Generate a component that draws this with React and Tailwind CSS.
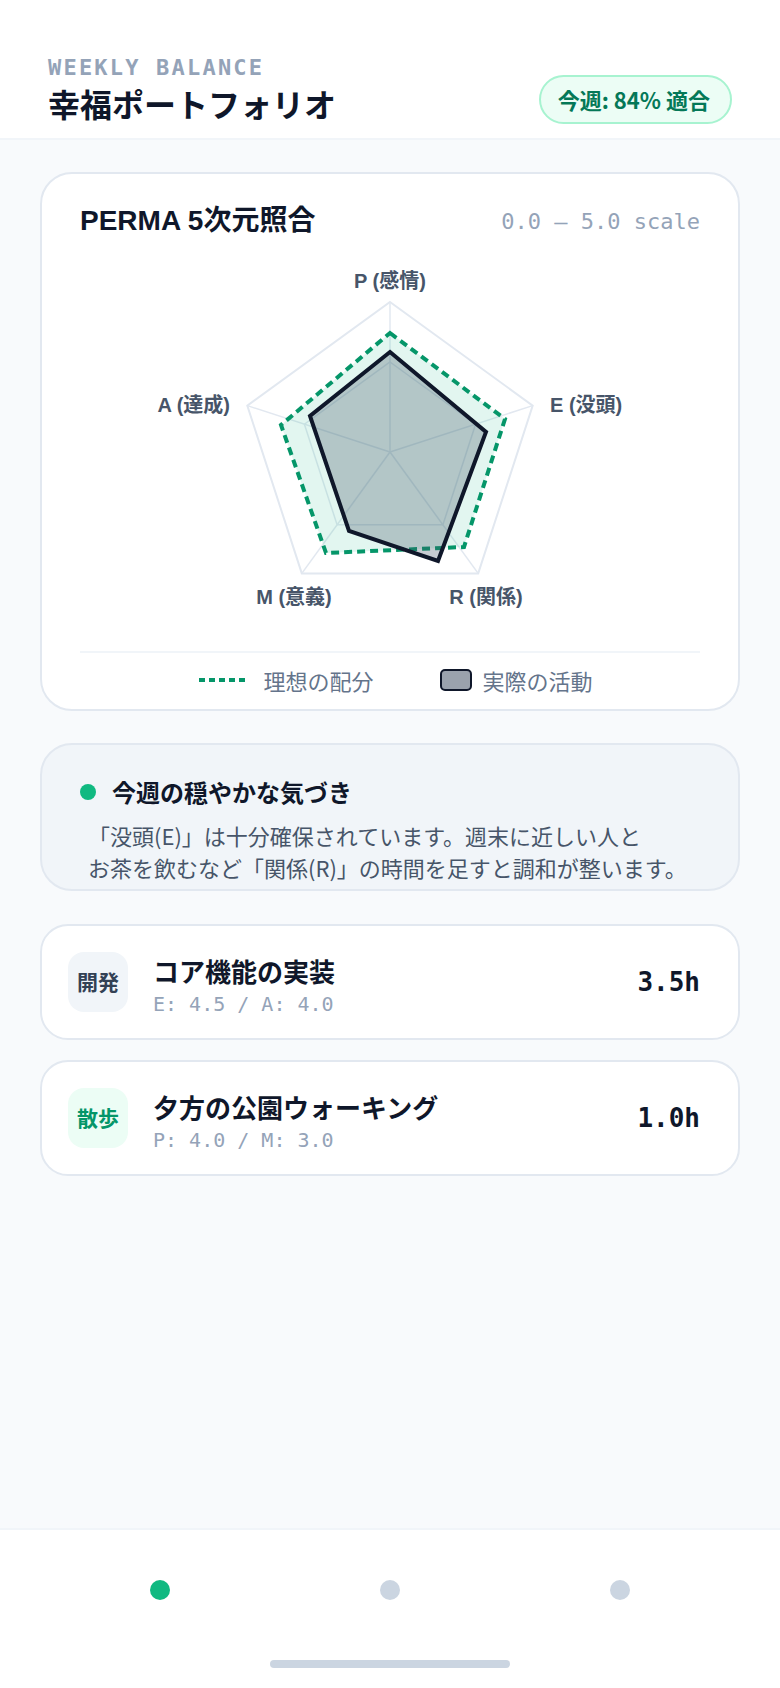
import React from "react";

const mono = "font-['DejaVu_Sans_Mono',monospace]";
const arialish = "font-['Liberation_Sans','Noto_Sans_CJK_JP',sans-serif]";

const cx = 390;
const cy = 452;

// pentagon points at a given radius, starting at the top and going clockwise
const ring = (r) =>
  [0, 1, 2, 3, 4]
    .map((i) => {
      const a = ((-90 + 72 * i) * Math.PI) / 180;
      return `${(cx + r * Math.cos(a)).toFixed(1)},${(cy + r * Math.sin(a)).toFixed(1)}`;
    })
    .join(" ");

const axisEnds = [0, 1, 2, 3, 4].map((i) => {
  const a = ((-90 + 72 * i) * Math.PI) / 180;
  return [cx + 150 * Math.cos(a), cy + 150 * Math.sin(a)];
});

// P, E, R, M, A
const ideal = "390,333 505,419 464,547 326,553 281,425";
const actual = "390,352 486,432 438,561 349,531 310,416";

const tasks = [
  { tag: "開発", tagClass: "bg-[#f1f5f9] text-[#334155]", title: "コア機能の実装", sub: "E: 4.5 / A: 4.0", time: "3.5h" },
  { tag: "散歩", tagClass: "bg-[#ecfdf5] text-[#059669]", title: "夕方の公園ウォーキング", sub: "P: 4.0 / M: 3.0", time: "1.0h" },
];

function Radar() {
  return (
    <svg width="620" height="400" viewBox="80 237 620 400" className={"block " + arialish}>
      <polygon points={ring(150)} fill="none" stroke="#e2e8f0" strokeWidth="2" />
      <polygon points={ring(90)} fill="none" stroke="#e2e8f0" strokeWidth="1.5" />
      {axisEnds.map(([x, y], i) => (
        <line key={i} x1={cx} y1={cy} x2={x} y2={y} stroke="#e2e8f0" strokeWidth="1.5" />
      ))}
      <polygon points={ideal} fill="#10b981" fillOpacity="0.12" stroke="#059669" strokeWidth="4" strokeDasharray="8 5" />
      <polygon points={actual} fill="#475569" fillOpacity="0.3" stroke="#0f172a" strokeWidth="4" />
      <g fill="#475569" fontWeight="700" fontSize="20">
        <text x="390" y="288" textAnchor="middle">P (感情)</text>
        <text x="550" y="412" textAnchor="start">E (没頭)</text>
        <text x="230" y="412" textAnchor="end">A (達成)</text>
        <text x="294" y="604" textAnchor="middle">M (意義)</text>
        <text x="486" y="604" textAnchor="middle">R (関係)</text>
      </g>
    </svg>
  );
}

export default function App() {
  return (
    <div className="h-screen flex flex-col bg-[#f8fafc] font-['Noto_Sans_CJK_JP',sans-serif] text-[#0f172a]">
      <header className="bg-white border-b-2 border-[#f1f5f9] px-12 pt-[54px] pb-[15px] flex items-end justify-between">
        <div>
          <div className={mono + " text-[22px] leading-[28px] font-bold tracking-[0.1em] text-[#94a3b8]"}>WEEKLY BALANCE</div>
          <h1 className="text-[32px] leading-[40px] font-bold mt-px">幸福ポートフォリオ</h1>
        </div>
        <div className="mb-[-1px] rounded-full border-2 border-[#a7f3d0] bg-[#ecfdf5] pl-[17px] pr-5 py-2 text-[22px] leading-[29px] font-bold text-[#047857]">
          今週: 84% 適合
        </div>
      </header>

      <main className="flex-1 overflow-hidden px-10">
        <section className="mt-8 rounded-[32px] border-2 border-[#e2e8f0] bg-white px-[38px] pt-[31px] pb-[15px]">
          <div className="flex h-8 items-center justify-between">
            <h2 className={arialish + " text-[28px] font-bold"}>PERMA 5次元照合</h2>
            <span className={mono + " text-[22px] text-[#94a3b8]"}>0.0 – 5.0 scale</span>
          </div>
          <Radar />
          <div className="mt-[14px] border-t-2 border-[#f1f5f9] pt-[13px] pl-3 flex justify-center items-center gap-[66px] text-[22px] leading-[28px] text-[#64748b]">
            <div className="flex items-center gap-[18px]">
              <svg width="46" height="4" className="block">
                <line x1="0" y1="2" x2="46" y2="2" stroke="#059669" strokeWidth="4" strokeDasharray="6 4" />
              </svg>
              <span>理想の配分</span>
            </div>
            <div className="flex items-center gap-[11px]">
              <span className="block h-[22px] w-8 rounded-[5px] border-2 border-[#0f172a] bg-[#9aa2ad]" />
              <span>実際の活動</span>
            </div>
          </div>
        </section>

        <section className="mt-8 h-[148px] overflow-hidden rounded-[32px] border-2 border-[#e2e8f0] bg-[#f1f5f9] px-[38px] pt-[31px]">
          <div className="flex h-8 items-center gap-4">
            <span className="block h-4 w-4 rounded-full bg-[#10b981]" />
            <h3 className="text-[24px] font-bold">今週の穏やかな気づき</h3>
          </div>
          <p className="mt-[11px] pl-2 text-[22px] leading-[32px] text-[#475569]">
            「没頭(E)」は十分確保されています。週末に近しい人と
            <br />
            お茶を飲むなど「関係(R)」の時間を足すと調和が整います。
          </p>
        </section>

        <div className="mt-[33px] flex flex-col gap-5">
          {tasks.map((t) => (
            <div key={t.title} className="flex h-[116px] items-center gap-[25px] rounded-[28px] border-2 border-[#e2e8f0] bg-white pl-[26px] pr-[38px]">
              <div className={"flex h-[60px] w-[60px] shrink-0 items-center justify-center rounded-2xl text-[21px] font-bold " + t.tagClass}>
                {t.tag}
              </div>
              <div className="flex-1 pt-[6px]">
                <div className="text-[26px] leading-[34px] font-bold">{t.title}</div>
                <div className={mono + " mt-1 text-[20px] leading-[24px] text-[#94a3b8]"}>{t.sub}</div>
              </div>
              <div className={mono + " text-[26px] font-bold"}>{t.time}</div>
            </div>
          ))}
        </div>
      </main>

      <nav className="bg-white border-t-2 border-[#f1f5f9] pt-[50px] pb-5">
        <div className="grid grid-cols-3 px-[45px]">
          <span className="mx-auto block h-5 w-5 rounded-full bg-[#10b981]" />
          <span className="mx-auto block h-5 w-5 rounded-full bg-[#cbd5e1]" />
          <span className="mx-auto block h-5 w-5 rounded-full bg-[#cbd5e1]" />
        </div>
        <div className="mx-auto mt-[60px] h-2 w-60 rounded-full bg-[#cbd5e1]" />
      </nav>
    </div>
  );
}
